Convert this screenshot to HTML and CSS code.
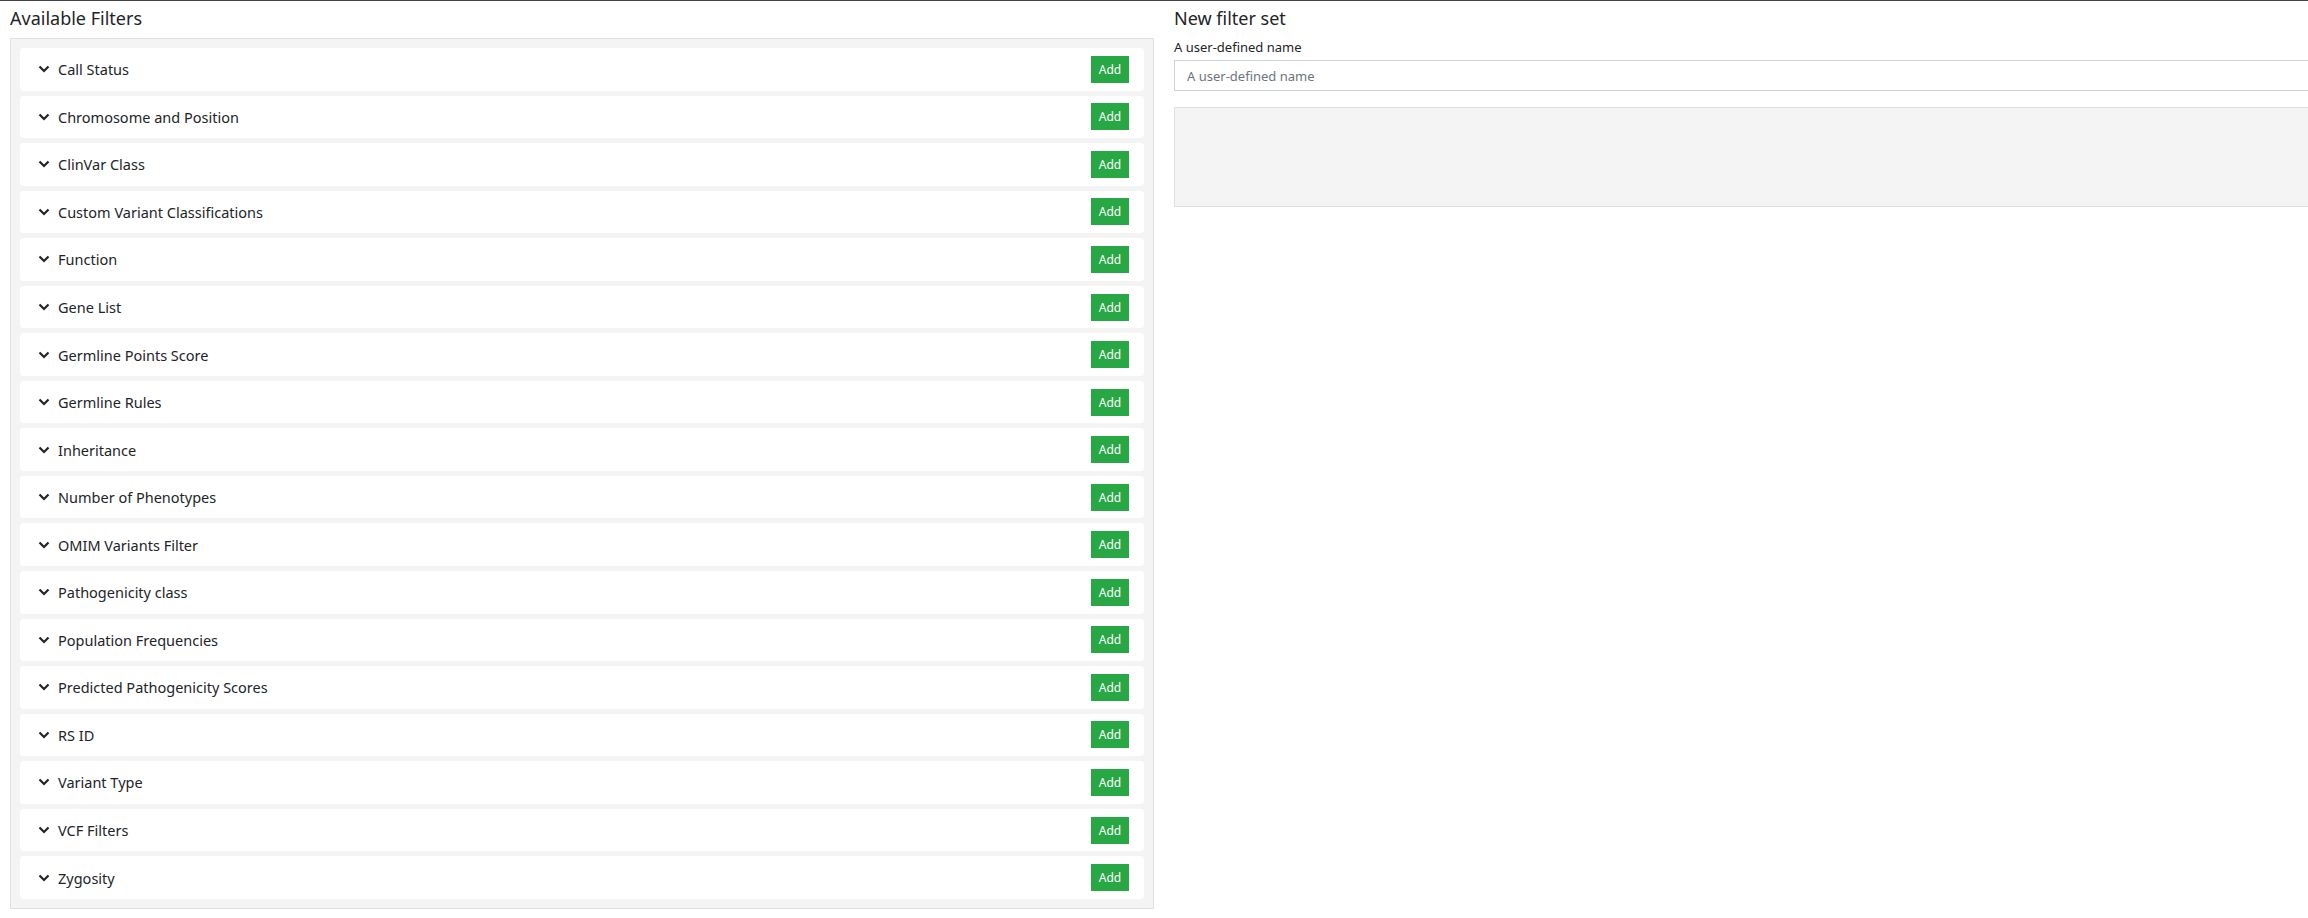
FILE: index.html
```html
<!DOCTYPE html>
<html lang="en">

<head>
    <meta charset="UTF-8" />
    <meta name="viewport" content="width=device-width, initial-scale=1.0" />
    <title>Filter sets</title>
    <link rel="stylesheet" href="styles.css">
</head>

<body>
    <div class="page">
        <div class="col">
            <h2 class="col-title">Available Filters</h2>
            <div class="filter-list">
                <div class="filter-item"><svg class="chevron" viewBox="0 0 12 8"><path d="M1.5 1.5 L6 6 L10.5 1.5" /></svg><span>Call Status</span><button class="add">Add</button></div>
                <div class="filter-item"><svg class="chevron" viewBox="0 0 12 8"><path d="M1.5 1.5 L6 6 L10.5 1.5" /></svg><span>Chromosome and Position</span><button class="add">Add</button></div>
                <div class="filter-item"><svg class="chevron" viewBox="0 0 12 8"><path d="M1.5 1.5 L6 6 L10.5 1.5" /></svg><span>ClinVar Class</span><button class="add">Add</button></div>
                <div class="filter-item"><svg class="chevron" viewBox="0 0 12 8"><path d="M1.5 1.5 L6 6 L10.5 1.5" /></svg><span>Custom Variant Classifications</span><button class="add">Add</button></div>
                <div class="filter-item"><svg class="chevron" viewBox="0 0 12 8"><path d="M1.5 1.5 L6 6 L10.5 1.5" /></svg><span>Function</span><button class="add">Add</button></div>
                <div class="filter-item"><svg class="chevron" viewBox="0 0 12 8"><path d="M1.5 1.5 L6 6 L10.5 1.5" /></svg><span>Gene List</span><button class="add">Add</button></div>
                <div class="filter-item"><svg class="chevron" viewBox="0 0 12 8"><path d="M1.5 1.5 L6 6 L10.5 1.5" /></svg><span>Germline Points Score</span><button class="add">Add</button></div>
                <div class="filter-item"><svg class="chevron" viewBox="0 0 12 8"><path d="M1.5 1.5 L6 6 L10.5 1.5" /></svg><span>Germline Rules</span><button class="add">Add</button></div>
                <div class="filter-item"><svg class="chevron" viewBox="0 0 12 8"><path d="M1.5 1.5 L6 6 L10.5 1.5" /></svg><span>Inheritance</span><button class="add">Add</button></div>
                <div class="filter-item"><svg class="chevron" viewBox="0 0 12 8"><path d="M1.5 1.5 L6 6 L10.5 1.5" /></svg><span>Number of Phenotypes</span><button class="add">Add</button></div>
                <div class="filter-item"><svg class="chevron" viewBox="0 0 12 8"><path d="M1.5 1.5 L6 6 L10.5 1.5" /></svg><span>OMIM Variants Filter</span><button class="add">Add</button></div>
                <div class="filter-item"><svg class="chevron" viewBox="0 0 12 8"><path d="M1.5 1.5 L6 6 L10.5 1.5" /></svg><span>Pathogenicity class</span><button class="add">Add</button></div>
                <div class="filter-item"><svg class="chevron" viewBox="0 0 12 8"><path d="M1.5 1.5 L6 6 L10.5 1.5" /></svg><span>Population Frequencies</span><button class="add">Add</button></div>
                <div class="filter-item"><svg class="chevron" viewBox="0 0 12 8"><path d="M1.5 1.5 L6 6 L10.5 1.5" /></svg><span>Predicted Pathogenicity Scores</span><button class="add">Add</button></div>
                <div class="filter-item"><svg class="chevron" viewBox="0 0 12 8"><path d="M1.5 1.5 L6 6 L10.5 1.5" /></svg><span>RS ID</span><button class="add">Add</button></div>
                <div class="filter-item"><svg class="chevron" viewBox="0 0 12 8"><path d="M1.5 1.5 L6 6 L10.5 1.5" /></svg><span>Variant Type</span><button class="add">Add</button></div>
                <div class="filter-item"><svg class="chevron" viewBox="0 0 12 8"><path d="M1.5 1.5 L6 6 L10.5 1.5" /></svg><span>VCF Filters</span><button class="add">Add</button></div>
                <div class="filter-item"><svg class="chevron" viewBox="0 0 12 8"><path d="M1.5 1.5 L6 6 L10.5 1.5" /></svg><span>Zygosity</span><button class="add">Add</button></div>
            </div>
        </div>
        <div class="col">
            <h2 class="col-title">New filter set</h2>
            <label class="field-label" for="set-name">A user-defined name</label>
            <input class="field-input" id="set-name" type="text" placeholder="A user-defined name" />
            <div class="drop-zone"></div>
        </div>
    </div>
</body>

</html>
```

FILE: styles.css
```css
* {
    box-sizing: border-box;
}

html,
body {
    overflow: hidden;
}

body {
    margin: 0;
    border-top: 1px solid #444;
    font-family: "Noto Sans", "Open Sans", sans-serif;
    color: #212529;
    background: #fff;
}

.page {
    display: flex;
    width: 2328px;
}

.col {
    width: 1164px;
    flex-shrink: 0;
    padding: 0 10px;
}

.col-title {
    margin: 6px 0 9px;
    font-size: 18px;
    font-weight: 400;
    line-height: 22px;
}

.filter-list {
    background: #f4f4f4;
    border: 1px solid #e0e0e0;
    padding: 9px;
}

.filter-item {
    display: flex;
    align-items: center;
    height: 42.55px;
    margin-bottom: 5px;
    padding: 0 15px 0 18px;
    background: #fff;
    border-radius: 4px;
    font-size: 14.5px;
}

.filter-item:last-child {
    margin-bottom: 0;
}

.chevron {
    width: 12px;
    height: 8px;
    margin-right: 8px;
    fill: none;
    stroke: #212529;
    stroke-width: 2.2;
}

.add {
    margin-left: auto;
    width: 38px;
    height: 27px;
    padding: 0;
    border: none;
    background: #28a745;
    color: #fff;
    font-family: inherit;
    font-size: 12px;
    cursor: pointer;
}

.field-label {
    display: block;
    font-size: 13px;
    line-height: 18px;
    margin-bottom: 4px;
}

.field-input {
    display: block;
    width: 100%;
    height: 31px;
    padding: 0 12px;
    border: 1px solid #ced4da;
    font-family: inherit;
    font-size: 13px;
    color: #495057;
}

.field-input::placeholder {
    color: #6c757d;
}

.drop-zone {
    margin-top: 16px;
    height: 100px;
    background: #f4f4f4;
    border: 1px solid #e0e0e0;
}
```
